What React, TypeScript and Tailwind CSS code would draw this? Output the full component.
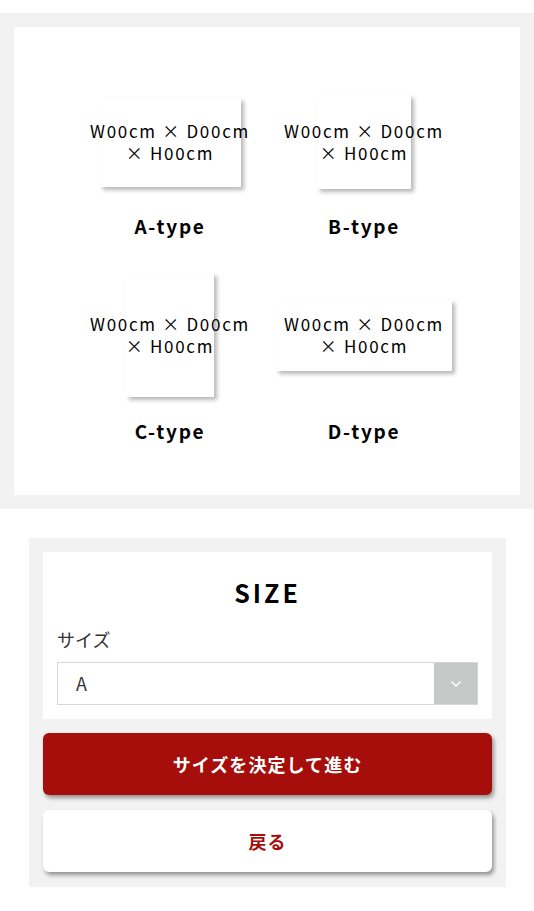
import React from "react";

const FONT = { fontFamily: '"Noto Sans CJK JP", "Noto Sans", sans-serif' };

type Item = { label: string; w: number; h: number };

function Cell({ item, areaH }: { item: Item; areaH: string }) {
  return (
    <div className="flex flex-col items-center">
      <div className={`relative flex w-full items-center justify-center ${areaH}`}>
        <div
          className="bg-white shadow-[3px_3px_4px_rgba(0,0,0,0.28)]"
          style={{ width: item.w, height: item.h }}
        />
        <div className="absolute inset-0 flex items-center justify-center">
          <p className="text-center text-[17px] leading-[22px] tracking-[0.1em] text-black whitespace-nowrap">
            W00cm × D00cm
            <br />× H00cm
          </p>
        </div>
      </div>
      <div className="mt-[18px] h-[28px] text-[19px] font-bold leading-[28px] tracking-[0.09em] text-black">
        {item.label}
      </div>
    </div>
  );
}

export default function App() {
  const row1: Item[] = [
    { label: "A-type", w: 141, h: 89 },
    { label: "B-type", w: 94, h: 94 },
  ];
  const row2: Item[] = [
    { label: "C-type", w: 88, h: 124 },
    { label: "D-type", w: 176, h: 71 },
  ];
  return (
    <div className="min-h-[911px] bg-white pt-[13px]" style={FONT}>
      <section className="bg-[#f2f2f2] p-[14px]">
        <div className="bg-white px-[59px] pt-[63px] pb-[50px]">
          <div className="grid grid-cols-2">
            {row1.map((it) => (
              <Cell key={it.label} item={it} areaH="h-[104px]" />
            ))}
          </div>
          <div className="mt-[31px] grid grid-cols-2">
            {row2.map((it) => (
              <Cell key={it.label} item={it} areaH="h-[128px]" />
            ))}
          </div>
        </div>
      </section>

      <section className="ml-[29px] mt-[29px] w-[477px] bg-[#f2f2f2] px-[14px] pt-[14px] pb-[15px]">
        <div className="bg-white px-[14px] pt-[22px] pb-[14px]">
          <h2 className="text-center text-[25px] font-bold leading-[36px] tracking-[0.12em] text-black">
            SIZE
          </h2>
          <div className="mt-[16px] text-[18px] leading-[26px] text-[#333]">サイズ</div>
          <div className="mt-[10px] flex h-[43px] border border-[#d6d6d6]">
            <div className="flex flex-1 items-center pl-[18px] text-[18px] text-[#333]">A</div>
            <div className="flex w-[43px] items-center justify-center bg-[#c5cac9]">
              <svg width="12" height="8" viewBox="0 0 12 8" fill="none">
                <path d="M1.5 1.5 L6 6 L10.5 1.5" stroke="white" strokeWidth="1.5" />
              </svg>
            </div>
          </div>
        </div>
        <button className="mt-[14px] flex h-[62px] w-full items-center justify-center rounded-[6px] bg-[#a50e0a] text-[18px] font-bold tracking-[0.06em] text-white shadow-[2px_3px_4px_rgba(0,0,0,0.4)]">
          サイズを決定して進む
        </button>
        <button className="mt-[15px] flex h-[62px] w-full items-center justify-center rounded-[6px] bg-white text-[18px] font-bold tracking-[0.06em] text-[#a50e0a] shadow-[2px_3px_4px_rgba(0,0,0,0.4)]">
          戻る
        </button>
      </section>
    </div>
  );
}
